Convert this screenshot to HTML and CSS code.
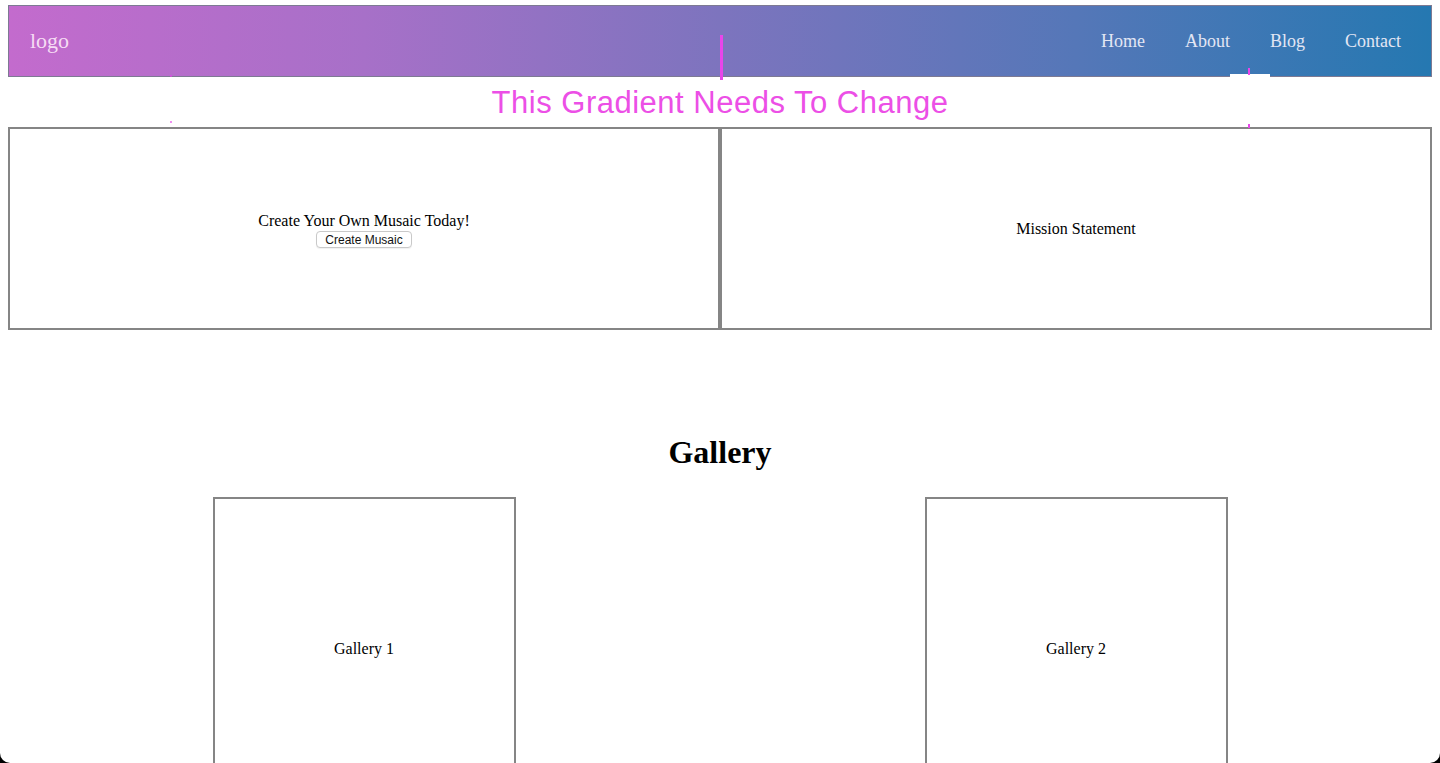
FILE: index.html
```html
<!DOCTYPE html>
<html lang="en">
<head>
<meta charset="utf-8">
<title>Musaic</title>
<link rel="stylesheet" href="styles.css">
</head>
<body>
<div class="page">
  <header class="site-header">
    <div class="logo">logo</div>
    <nav class="nav">
      <a class="nav-link" href="#">Home</a>
      <a class="nav-link" href="#">About</a>
      <a class="nav-link" href="#">Blog</a>
      <a class="nav-link" href="#">Contact</a>
    </nav>
    <span class="nav-indicator"></span>
  </header>

  <div class="note">This Gradient Needs To Change</div>

  <section class="hero">
    <div class="hero-box">
      <div class="hero-inner">
        <p class="hero-text">Create Your Own Musaic Today!</p>
        <button class="btn" type="button">Create Musaic</button>
      </div>
    </div>
    <div class="hero-box">
      <p class="hero-text">Mission Statement</p>
    </div>
  </section>

  <section class="gallery">
    <h1 class="gallery-title">Gallery</h1>
    <div class="gallery-grid">
      <div class="gallery-cell"><div class="gallery-box">Gallery 1</div></div>
      <div class="gallery-cell"><div class="gallery-box">Gallery 2</div></div>
    </div>
  </section>

  <div class="marks">
    <span class="mark mark-main"></span>
    <span class="mark mark-a"></span>
    <span class="mark mark-b"></span>
    <span class="mark mark-c"></span>
    <span class="mark mark-d"></span>
  </div>
</div>
<div class="window-frame"></div>
</body>
</html>
```

FILE: styles.css
```css
* { box-sizing: border-box; }

html, body {
  margin: 0;
  padding: 0;
  background: #ffffff;
  overflow: hidden;
}

body {
  font-family: "Liberation Serif", "Times New Roman", serif;
  color: #000;
}

.page {
  position: relative;
  padding: 5px 8px 0;
}

.site-header {
  position: relative;
  height: 72px;
  border: 1px solid #7d7a93;
  background: linear-gradient(to right, #c36bcd 0%, #a770c8 25%, #7d74be 50%, #5577b8 75%, #2578b1 100%);
  display: flex;
  align-items: center;
  justify-content: space-between;
  padding: 0 30px 0 21px;
}

.logo {
  font-size: 22px;
  color: #f6dcf4;
}

.nav {
  display: flex;
  gap: 40px;
}

.nav-link {
  font-size: 18px;
  color: #e3e6f4;
  text-decoration: none;
}

.nav-indicator {
  position: absolute;
  right: 161px;
  bottom: -1px;
  width: 40px;
  height: 3px;
  background: #ffffff;
}

.note {
  height: 50px;
  display: flex;
  align-items: center;
  justify-content: center;
  font-family: "Liberation Sans", Arial, sans-serif;
  font-size: 31px;
  letter-spacing: 0.5px;
  color: #ec4fe6;
  padding-top: 2px;
}

.hero {
  display: grid;
  grid-template-columns: 1fr 1fr;
}

.hero-box {
  height: 203px;
  border: 2px solid #858585;
  display: flex;
  align-items: center;
  justify-content: center;
  text-align: center;
}

.hero-inner {
  display: flex;
  flex-direction: column;
  align-items: center;
  padding-top: 3px;
}

.hero-text {
  margin: 0;
  font-size: 16px;
  line-height: 18px;
}

.btn {
  margin-top: 1px;
  font-family: "Liberation Sans", Arial, sans-serif;
  font-size: 12px;
  line-height: 14px;
  height: 17px;
  padding: 0 8px;
  background: #ffffff;
  color: #111;
  border: 1px solid #c9c9c9;
  border-radius: 4px;
  box-shadow: 0 1px 1px rgba(0,0,0,0.06);
}

.gallery-title {
  margin: 104px 0 26px;
  text-align: center;
  font-size: 32px;
  font-weight: bold;
}

.gallery-grid {
  display: grid;
  grid-template-columns: 1fr 1fr;
}

.gallery-cell {
  display: flex;
  justify-content: center;
}

.gallery-box {
  width: 303px;
  height: 303px;
  border: 2px solid #858585;
  display: flex;
  align-items: center;
  justify-content: center;
  font-size: 16px;
}

.marks {
  position: absolute;
  inset: 0;
  pointer-events: none;
}

.mark {
  position: absolute;
  width: 2px;
  background: #e845ea;
}

.mark-main { left: 720px; top: 35px; height: 45px; width: 3px; }
.mark-a { left: 1248px; top: 68px; height: 7px; }
.mark-b { left: 1248px; top: 124px; height: 4px; }
.mark-c { left: 170px; top: 75px; height: 2px; opacity: 0.6; }
.mark-d { left: 170px; top: 121px; height: 2px; opacity: 0.6; }

.window-frame {
  position: fixed;
  inset: 0;
  border-radius: 0 0 10px 10px;
  box-shadow: 0 0 0 30px #000;
  pointer-events: none;
}
```
